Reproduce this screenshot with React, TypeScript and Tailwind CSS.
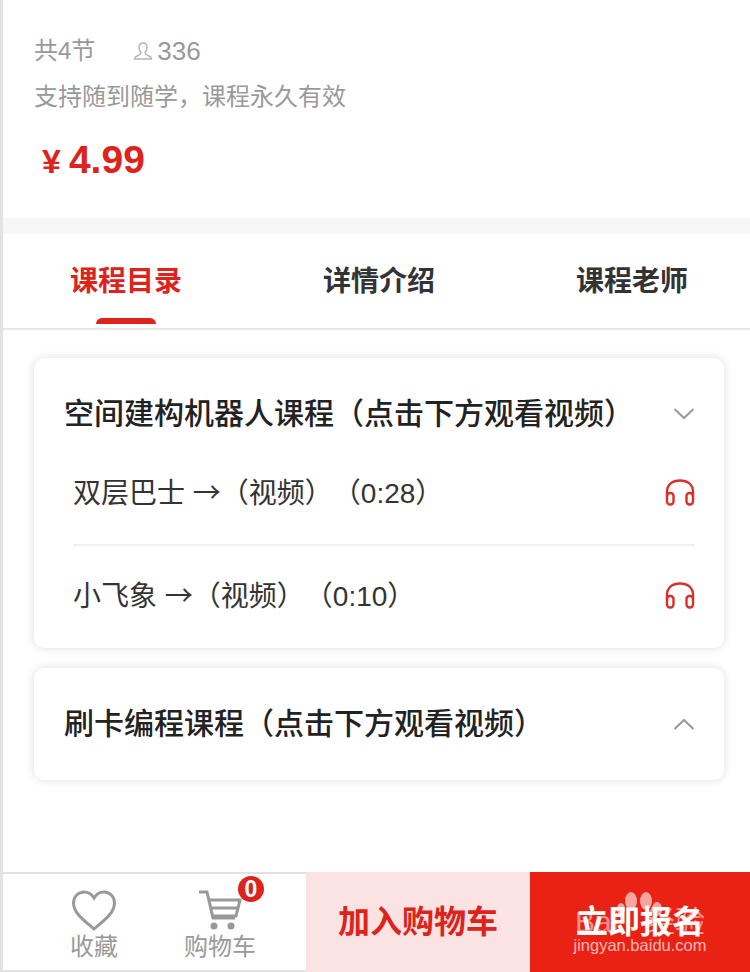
const cjk = "font-['Liberation_Sans','Noto_Sans_CJK_SC',sans-serif]";

function Chevron({ up }: { up?: boolean }) {
  return (
    <svg width="22" height="14" viewBox="0 0 22 14" fill="none" stroke="#9a9a9a" strokeWidth="2">
      <path d={up ? "M1.5 12 L11 3 L20.5 12" : "M1.5 2 L11 11 L20.5 2"} />
    </svg>
  );
}

function Headphones() {
  return (
    <svg width="30" height="28" viewBox="0 0 30 28" fill="none" stroke="#d9302c" strokeWidth="2.4" strokeLinecap="round">
      <path d="M2 17 V13 C2 5.5 7.5 1.5 15 1.5 C22.5 1.5 28 5.5 28 13 V17" />
      <rect x="2" y="14" width="6.5" height="11.5" rx="3" />
      <rect x="21.5" y="14" width="6.5" height="11.5" rx="3" />
    </svg>
  );
}

function Lesson({ name, time }: { name: string; time: string }) {
  return (
    <div className="flex items-center justify-between">
      <span className="text-[28px] leading-[36px] text-[#333333] [text-spacing-trim:space-all] whitespace-nowrap">
        {name} <span className="font-['Noto_Sans_CJK_SC',sans-serif]">→</span>（视频）（{time}）
      </span>
      <Headphones />
    </div>
  );
}

export default function App() {
  return (
    <div className={`${cjk} h-[972px] w-[750px] overflow-hidden bg-white flex flex-col border-l-[3px] border-[#e2e2e2]`}>
      {/* info */}
      <div className="h-[218px] pt-[33px] pl-[31px]">
        <div className="flex items-center text-[24px] leading-[36px] text-[#999999]">
          <span>共4节</span>
          <svg className="ml-[38px] mr-[4px]" width="20" height="18" viewBox="0 0 20 18" fill="none" stroke="#b4b4b4" strokeWidth="1.4">
            <path d="M10 1 C7 1 6 3.2 6 5.5 C6 8 7 9.5 8 10.5 C8 12.5 6 13 4 14 C2.5 14.7 1.5 15.5 1.5 17 H18.5 C18.5 15.5 17.5 14.7 16 14 C14 13 12 12.5 12 10.5 C13 9.5 14 8 14 5.5 C14 3.2 13 1 10 1 Z" />
          </svg>
          <span className="text-[26px]">336</span>
        </div>
        <div className="mt-[10px] text-[24px] leading-[36px] text-[#999999]">支持随到随学，课程永久有效</div>
        <div className="mt-[23px] pl-[8px] flex items-baseline text-[39px] leading-[44px] font-bold text-[#dc231c]">
          <span className="text-[34px] mr-[8px]">¥</span>
          <span>4.99</span>
        </div>
      </div>
      <div className="h-[16px] bg-[#f6f6f6]" />

      {/* tabs */}
      <div className="relative h-[96px] flex border-b-2 border-[#e6e6e6] text-[28px] font-bold text-[#333333]">
        <div className="w-[245px] pl-[67px] pt-[27px] text-[#dc231c]">课程目录</div>
        <div className="w-[253px] pl-[75px] pt-[27px]">详情介绍</div>
        <div className="pl-[75px] pt-[27px] whitespace-nowrap">课程老师</div>
        <div className="absolute left-[93px] bottom-[4px] h-[6px] w-[60px] rounded-t-[6px] bg-[#dc231c]" />
      </div>

      {/* chapters */}
      <div className="flex-1 pl-[31px] pr-[26px] pt-[28px] flex flex-col gap-[20px]">
        <div className="h-[290px] rounded-[10px] bg-white shadow-[0_0_10px_rgba(0,0,0,0.14)] pl-[30px] pr-[29px] pt-[38px]">
          <div className="flex items-center justify-between">
            <span className="text-[30px] leading-[36px] font-medium text-[#222222] whitespace-nowrap">空间建构机器人课程（点击下方观看视频）</span>
            <Chevron />
          </div>
          <div className="pl-[9px] mt-[41px]">
            <Lesson name="双层巴士" time="0:28" />
            <div className="h-[2px] bg-[#f0f0f0] mt-[32px] mb-[30px]" />
            <Lesson name="小飞象" time="0:10" />
          </div>
        </div>
        <div className="h-[112px] rounded-[10px] bg-white shadow-[0_0_10px_rgba(0,0,0,0.14)] pl-[30px] pr-[29px] flex items-center justify-between">
          <span className="text-[30px] leading-[36px] font-medium text-[#222222] whitespace-nowrap">刷卡编程课程（点击下方观看视频）</span>
          <Chevron up />
        </div>
      </div>

      {/* bottom bar */}
      <div className="h-[100px] flex border-y-2 border-[#e2e2e2] text-[#999999] bg-white">
        <div className="w-[303px] pl-[28px] flex">
          <div className="w-[126px] flex flex-col items-center pt-[16px]">
            <svg width="46" height="42" viewBox="0 0 46 42" fill="none" stroke="#999999" strokeWidth="3">
              <path d="M23 39 C14 31 2.5 23.5 2.5 13 C2.5 6.5 7.5 2 13 2 C17.5 2 21 4.5 23 8 C25 4.5 28.5 2 33 2 C38.5 2 43.5 6.5 43.5 13 C43.5 23.5 32 31 23 39 Z" />
            </svg>
            <span className="mt-[1px] text-[24px] leading-[28px]">收藏</span>
          </div>
          <div className="relative w-[126px] flex flex-col items-center pt-[16px]">
            <svg width="44" height="42" viewBox="0 0 44 42" fill="none" stroke="#999999" strokeWidth="3">
              <path d="M1 2 H9 L15 28 H37" />
              <path d="M10 10 H42 L38 26 H14" />
              <path d="M12 18 H40" />
              <circle cx="16" cy="36" r="3.5" fill="#999999" stroke="none" />
              <circle cx="33" cy="36" r="3.5" fill="#999999" stroke="none" />
            </svg>
            <span className="mt-[1px] text-[24px] leading-[28px] whitespace-nowrap">购物车</span>
            <span className="absolute left-[81px] top-[2px] flex h-[26px] w-[26px] items-center justify-center rounded-full bg-[#dc231c] text-[23px] font-bold leading-none text-white">0</span>
          </div>
        </div>
        <div className="w-[224px] -my-[2px] flex items-center justify-center bg-[#fbe3e4] text-[32px] font-bold text-[#dc231c]">加入购物车</div>
        <div className="relative flex-1 -my-[2px] flex items-center justify-center bg-[#e92214] text-[32px] font-bold text-white">
          立即报名
          {/* watermark */}
          <div className="absolute inset-0 flex flex-col items-center pt-[18px] text-white/70">
            <svg width="50" height="26" viewBox="0 0 50 26" fill="#ffffff" fillOpacity="0.6">
              <ellipse cx="16" cy="11" rx="6" ry="9" />
              <ellipse cx="31" cy="11" rx="6" ry="9" />
              <ellipse cx="42" cy="19" rx="5" ry="7" />
              <ellipse cx="6" cy="19" rx="4" ry="6" />
            </svg>
            <div className="w-[130px] flex justify-between text-[30px] leading-[32px] font-normal text-white/50 -mt-[10px]">
              <span>Bai</span>
              <span>经验</span>
            </div>
            <div className="-mt-[3px] text-[16.5px] leading-[20px] font-normal whitespace-nowrap">jingyan.baidu.com</div>
          </div>
        </div>
      </div>
    </div>
  );
}
